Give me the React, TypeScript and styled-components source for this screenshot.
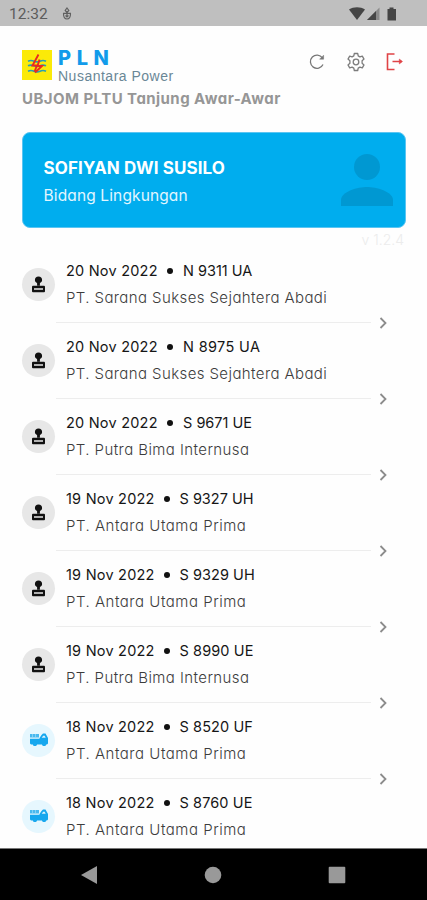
import React from "react";
import styled, { createGlobalStyle } from "styled-components";

const GlobalStyle = createGlobalStyle`
  * { box-sizing: border-box; }
  body { margin: 0; background: #fff; }
`;

const Screen = styled.div`
  width: 427px;
  height: 900px;
  display: flex;
  flex-direction: column;
  overflow: hidden;
  background: #fefefe;
  font-family: Inter, sans-serif;
  font-feature-settings: "cv11";
`;

const StatusBar = styled.div`
  height: 26px;
  flex: none;
  display: flex;
  align-items: center;
  padding: 2px 29px 0 9px;
  background: #bfbfbf;
  color: #5c5c5c;
  font: 400 15.5px/24px Roboto, sans-serif;
`;

const Clock = styled.span`
  width: 52px;
`;

const StatusIcons = styled.div`
  margin-left: auto;
  display: flex;
  align-items: center;
`;

const Header = styled.header`
  flex: none;
  height: 106px;
  padding: 22px 22px 0 22px;
`;

const BrandRow = styled.div`
  display: flex;
  height: 37px;
`;

const LogoMark = styled.svg`
  margin-top: 2px;
  flex: none;
`;

const Brand = styled.div`
  margin-left: 6px;
  flex: 1;
`;

const BrandName = styled.div`
  font-size: 20px;
  font-weight: 800;
  line-height: 21px;
  letter-spacing: 5.6px;
  color: #129bea;
`;

const BrandSub = styled.div`
  font: 400 14px/14px "Liberation Sans", sans-serif;
  letter-spacing: 0.5px;
  white-space: nowrap;
  color: #6a8796;
`;

const Actions = styled.div`
  display: flex;
  gap: 19px;
  padding-top: 4px;
`;

const UnitName = styled.div`
  margin-top: 4px;
  line-height: 20px;
  font-size: 15px;
  font-weight: 700;
  letter-spacing: 0.45px;
  white-space: nowrap;
  color: #969696;
`;

const ProfileCard = styled.section`
  flex: none;
  height: 96px;
  margin: 0 21px 0 22px;
  padding: 0 11px 0 20.5px;
  display: flex;
  align-items: center;
  justify-content: space-between;
  border: 1px solid #5bc5f2;
  border-radius: 8px;
  background: #00adee;
  color: #fff;
`;

const ProfileInfo = styled.div`
  padding-top: 3px;
`;

const ProfileName = styled.div`
  font-size: 17px;
  font-weight: 700;
  line-height: 28px;
  letter-spacing: 0.1px;
  white-space: nowrap;
`;

const Department = styled.div`
  font-size: 15.5px;
  font-weight: 400;
  line-height: 28px;
  letter-spacing: 0.13px;
  color: #e2f6ff;
`;

const Version = styled.div`
  flex: none;
  height: 24px;
  padding: 2px 23px 0 0;
  line-height: 20px;
  font-size: 14px;
  font-weight: 300;
  text-align: right;
  color: #ececec;
`;

const List = styled.div`
  flex: 1;
  min-height: 0;
  overflow: hidden;
`;

const Item = styled.article`
  height: 76px;
`;

const ItemBody = styled.div`
  height: 64px;
  display: flex;
  align-items: center;
  padding-left: 22px;
`;

const Badge = styled.div<{ $truck?: boolean }>`
  width: 33px;
  height: 33px;
  flex: none;
  display: grid;
  place-items: center;
  border-radius: 50%;
  background: ${(p) => (p.$truck ? "#e6f7fe" : "#e7e7e7")};
`;

const ItemText = styled.div`
  margin-left: 11px;
  white-space: nowrap;
`;

const TopLine = styled.div`
  display: flex;
  align-items: center;
  height: 27px;
  font-size: 14.5px;
  font-weight: 400;
  color: #161616;
`;

const DateText = styled.span<{ $width: number }>`
  width: ${(p) => p.$width}px;
  letter-spacing: 0.22px;
`;

const Dot = styled.span`
  width: 6px;
  height: 6px;
  margin: 1px 10px 0 9px;
  border-radius: 50%;
  background: #111;
`;

const Plate = styled.span<{ $spacing: number }>`
  letter-spacing: ${(p) => p.$spacing}px;
`;

const Company = styled.div<{ $spacing: number }>`
  line-height: 27px;
  font-size: 15px;
  font-weight: 300;
  letter-spacing: ${(p) => p.$spacing}px;
  color: #3c3c3c;
`;

const ItemFoot = styled.div`
  height: 12px;
  display: flex;
  align-items: center;
  padding: 1px 0 0 56px;
`;

const Rule = styled.div`
  width: 315px;
  height: 1px;
  background: #ededed;
`;

const Chevron = styled.svg`
  margin-left: 7px;
`;

const NavBar = styled.nav`
  flex: none;
  height: 52px;
  display: flex;
  align-items: center;
  justify-content: space-between;
  padding: 0 81px 0 80px;
  border-top: 1px solid #777;
  background: #000;
`;

const StampIcon = () => (
  <svg width="15" height="17" viewBox="0 0 15 17">
    <path d="M7.500.5A3.600 3.600 0 0 1 11.100 4c0 1.800-1.300 2.400-2.200 3.200V9.800H6.100V7.200C5.200 6.400 3.900 5.800 3.900 4A3.600 3.600 0 0 1 7.500.5Z" fill="#111" />
    <rect x="1" y="9.800" width="13" height="6.400" rx="1" fill="#111" />
    <path d="M3 13h9" stroke="#c4c4c4" strokeWidth="1.800" />
  </svg>
);

const TruckIcon = () => (
  <svg width="20" height="16" viewBox="0 0 20 16">
    <path d="M1 2h9v3.500H1z" fill="#49b9ef" />
    <path d="M3.500 2v3.500M6.500 2v3.500" stroke="#9bdaf8" strokeWidth=".7" />
    <path d="M10.500 6 12.500 3l1.500-1.500h2.500L19 6v5.500l-1 1h-.8a2.200 2.200 0 0 1-4.200 0H8a2.200 2.200 0 0 1-4.200 0H2l-1-1V6.800h9.500Z" fill="#16a7ee" />
    <path d="M12.700 5.800 14.200 3.700h1.500l1 2.100Z" fill="#d7f1fd" />
    <circle cx="5.900" cy="12.200" r="1.700" fill="#1aa8ee" />
    <circle cx="15.100" cy="12.200" r="1.700" fill="#1aa8ee" />
  </svg>
);

interface Delivery {
  date: string;
  dateWidth: number;
  plate: string;
  plateSpacing: number;
  company: string;
  truck?: boolean;
}

const SARANA = "PT. Sarana Sukses Sejahtera Abadi";
const PUTRA = "PT. Putra Bima Internusa";
const ANTARA = "PT. Antara Utama Prima";

const companySpacing: Record<string, number> = {
  [SARANA]: 0.4,
  [PUTRA]: 0.42,
  [ANTARA]: 0.52,
};

const deliveries: Delivery[] = [
  { date: "20 Nov 2022", dateWidth: 92, plate: "N 9311 UA", plateSpacing: 0, company: SARANA },
  { date: "20 Nov 2022", dateWidth: 92, plate: "N 8975 UA", plateSpacing: 0.35, company: SARANA },
  { date: "20 Nov 2022", dateWidth: 92, plate: "S 9671 UE", plateSpacing: 0, company: PUTRA },
  { date: "19 Nov 2022", dateWidth: 88.5, plate: "S 9327 UH", plateSpacing: 0, company: ANTARA },
  { date: "19 Nov 2022", dateWidth: 88.5, plate: "S 9329 UH", plateSpacing: 0.05, company: ANTARA },
  { date: "19 Nov 2022", dateWidth: 88.5, plate: "S 8990 UE", plateSpacing: 0.1, company: PUTRA },
  { date: "18 Nov 2022", dateWidth: 88.5, plate: "S 8520 UF", plateSpacing: 0.1, company: ANTARA, truck: true },
  { date: "18 Nov 2022", dateWidth: 88.5, plate: "S 8760 UE", plateSpacing: 0.1, company: ANTARA, truck: true },
];

export default function App() {
  return (
    <Screen>
      <GlobalStyle />
      <StatusBar>
        <Clock>12:32</Clock>
        <svg width="12" height="14" viewBox="0 0 12 14" fill="none" stroke="#606060" strokeWidth="1.200">
          <path d="M6 1 7.800 3.500 6 5.500 4.200 3.500ZM2 6.300h8M2.500 6.500c0 3 1.300 5.500 3.500 5.500s3.500-2.500 3.500-5.500M6 6v4M4.500 8.500 6 10l1.500-1.500" />
        </svg>
        <StatusIcons>
          <svg width="50" height="16" viewBox="0 0 50 16">
            <path d="M1 3.500C5.500.4 12.500.4 17 3.500L9 14Z" fill="#454545" />
            <path d="M19 14 31.500 1.500V14Z" fill="#8a8a8a" />
            <path d="M19 14 28 5v9Z" fill="#454545" />
            <path d="M41.500 1.500h4V3H48v11.500h-8.500V3h2Z" fill="#454545" />
          </svg>
        </StatusIcons>
      </StatusBar>

      <Header>
        <BrandRow>
          <LogoMark width="30" height="30" viewBox="0 0 30 30">
            <rect width="30" height="30" fill="#fbea08" />
            <path d="M6 11.200q3-1.400 6 0t6 0 6 0M6 15.800q3-1.400 6 0t6 0 6 0M6 21.200q3-1.400 6 0t6 0 6 0" fill="none" stroke="#2a9fb2" strokeWidth="1.700" />
            <path d="M16.500 4.500 10.500 15.500h4.500L12.500 21.500M17.500 9.500 15.500 16h4.500L13 22.500" fill="none" stroke="#ea2b20" strokeWidth="1.900" />
          </LogoMark>
          <Brand>
            <BrandName>PLN</BrandName>
            <BrandSub>Nusantara Power</BrandSub>
          </Brand>
          <Actions>
            <svg width="20" height="20" viewBox="0 0 20 20" fill="none" stroke="#777" strokeWidth="1.300">
              <path d="M16 12.500a6.600 6.600 0 1 1-.600-6.600" />
              <path d="M16.600 3.200v4h-4Z" fill="#777" strokeWidth=".5" />
            </svg>
            <svg width="20" height="20" viewBox="0 0 20 20" fill="none" stroke="#7c7c7c" strokeWidth="1.300" strokeLinejoin="round">
              <path d="M8.300 1.500h3.400l.5 2.400 1.700 1 2.400-.8 1.700 3-1.900 1.600v2.600l1.900 1.600-1.700 3-2.400-.8-1.700 1-.5 2.400H8.300l-.5-2.400-1.700-1-2.400.8-1.700-3 1.900-1.600V8.700L2 7.100l1.700-3 2.400.8 1.700-1Z" />
              <circle cx="10" cy="10" r="2.800" />
            </svg>
            <svg width="20" height="20" viewBox="0 0 20 20" fill="none" stroke="#e04346" strokeWidth="1.600">
              <path d="M9.500 2H2.500v15.500h7M7.500 9.500h9" />
              <path d="m14.300 7 3.200 2.500-3.200 2.500Z" fill="#e04346" strokeWidth=".5" />
            </svg>
          </Actions>
        </BrandRow>
        <UnitName>UBJOM PLTU Tanjung Awar-Awar</UnitName>
      </Header>

      <ProfileCard>
        <ProfileInfo>
          <ProfileName>SOFIYAN DWI SUSILO</ProfileName>
          <Department>Bidang Lingkungan</Department>
        </ProfileInfo>
        <svg width="54" height="54" viewBox="0 0 54 54" fill="#0098d2">
          <circle cx="27" cy="14" r="13" />
          <path d="M1 53v-6c0-8.500 17-13 26-13s26 4.500 26 13v6Z" />
        </svg>
      </ProfileCard>
      <Version>v 1.2.4</Version>

      <List>
        {deliveries.map((d, i) => (
          <Item key={i}>
            <ItemBody>
              <Badge $truck={d.truck}>{d.truck ? <TruckIcon /> : <StampIcon />}</Badge>
              <ItemText>
                <TopLine>
                  <DateText $width={d.dateWidth}>{d.date}</DateText>
                  <Dot />
                  <Plate $spacing={d.plateSpacing}>{d.plate}</Plate>
                </TopLine>
                <Company $spacing={companySpacing[d.company]}>{d.company}</Company>
              </ItemText>
            </ItemBody>
            <ItemFoot>
              <Rule />
              <Chevron width="10" height="12" viewBox="0 0 10 12" fill="none" stroke="#8c8c8c" strokeWidth="1.800">
                <path d="m2.500 1 5 5-5 5" />
              </Chevron>
            </ItemFoot>
          </Item>
        ))}
      </List>

      <NavBar>
        <svg width="18" height="20" viewBox="0 0 18 20"><path d="M1 10 17 1v18Z" fill="#999" /></svg>
        <svg width="18" height="18" viewBox="0 0 18 18"><circle cx="9" cy="9" r="8.300" fill="#999" /></svg>
        <svg width="18" height="18" viewBox="0 0 18 18"><rect x=".7" y=".7" width="16.600" height="16.600" rx="1" fill="#999" /></svg>
      </NavBar>
    </Screen>
  );
}
